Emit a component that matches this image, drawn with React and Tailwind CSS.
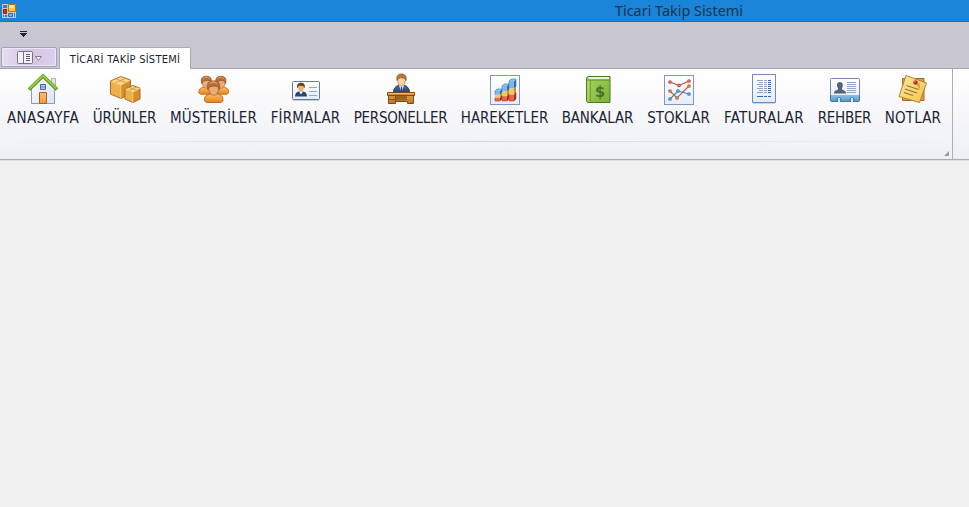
import React from "react";

function Gradient({ id, from, to, diagonal }) {
  return (
    <linearGradient id={id} x1="0" y1="0" x2={diagonal ? "1" : "0"} y2="1">
      <stop stopColor={from} />
      <stop offset="1" stopColor={to} />
    </linearGradient>
  );
}

function IconBox({ children }) {
  return (
    <svg className="block size-8 shrink-0" viewBox="0 0 32 32" fill="none">
      {children}
    </svg>
  );
}

function HomeIcon() {
  return (
    <IconBox>
      <defs>
        <Gradient id="wall" from="#ffffff" to="#d9e3f3" diagonal />
        <Gradient id="door" from="#f8c27c" to="#ef9a3c" />
      </defs>
      <path d="M24.500 5.500h4v9h-4z" fill="#dfe7f5" stroke="#a3b0cf" />
      <path d="M4.500 15 16 4l11.500 11v15.500h-23z" fill="url(#wall)" stroke="#8b9cc4" />
      <path d="M2 16.500 16 3l14 13.500" stroke="#5f961b" strokeWidth="3.600" />
      <path d="M2.500 15.700 16 2.700l13.500 13" stroke="#9bd343" strokeWidth="1.600" />
      <path d="M13.500 11.500h5v5h-5z" fill="#a9c5ec" stroke="#4a66a4" />
      <path d="M14 14h4" stroke="#6f8dc4" />
      <path d="M12.500 19.500h7v11h-7z" fill="url(#door)" stroke="#b5591a" />
    </IconBox>
  );
}

function Cube({ x, y, w, h }) {
  const t = h * 0.2;
  return (
    <g transform={`translate(${x} ${y})`} strokeLinejoin="round">
      <path d={`M0 ${t} ${w * 0.52} 0 ${w} ${t * 0.8} ${w * 0.52} ${t * 2}z`} fill="#f8d684" />
      <path d={`M0 ${t} ${w * 0.52} ${t * 2}V${h}L0 ${h - t}z`} fill="#eeb048" />
      <path d={`M${w * 0.52} ${t * 2} ${w} ${t * 0.8}V${h - t}L${w * 0.52} ${h}z`} fill="#d58e2b" />
      <path
        d={`M0 ${t} ${w * 0.52} 0 ${w} ${t * 0.8}V${h - t}L${w * 0.52} ${h} 0 ${h - t}z`}
        stroke="#a0621d"
        strokeWidth=".9"
      />
      <path d={`M0 ${t} ${w * 0.52} ${t * 2} ${w} ${t * 0.8}M${w * 0.52} ${t * 2}V${h}`} stroke="#f6d27d" strokeWidth=".7" />
      <path d={`M${w * 0.25} ${t * 0.5} ${w * 0.76} ${t * 1.4}M${w * 0.25} ${t * 1.4} ${w * 0.76} ${t * 0.45}`} stroke="#c78c35" strokeWidth=".7" />
    </g>
  );
}

function BoxesIcon() {
  return (
    <IconBox>
      <Cube x={1.5} y={3.500} w={20} h={22} />
      <Cube x={16} y={12.500} w={15} h={17} />
    </IconBox>
  );
}

function Person({ x, y, s }) {
  return (
    <g transform={`translate(${x} ${y}) scale(${s})`}>
      <path d="M1 18.500c0-3.500 2-4.500 6-5.500h6c4 1 6 2 6 5.500v1.500l-2 1.500H3L1 20z" fill="url(#torso)" stroke="#b55f14" strokeWidth=".9" />
      <path d="M7.500 13 10 16l2.500-3" fill="#f9dcb1" />
      <path d="M5 6c0 5.500 2 8.500 5 8.500s5-3 5-8.500L12 4H8z" fill="#e9ac78" stroke="#a55f30" strokeWidth=".8" />
      <path d="M4.300 9C2.700 2.500 5.500.3 9.500.4c5-.4 7.200 2.400 6.100 8.600l-1.500-3.200L10 5.300 6.500 6z" fill="#b86f38" stroke="#8f4a1f" strokeWidth=".7" />
      <path d="M6 3c2-2 5-2 7.500 0" stroke="#e2a56d" />
    </g>
  );
}

function CustomersIcon() {
  return (
    <IconBox>
      <defs>
        <Gradient id="torso" from="#fbbd62" to="#e9861b" />
      </defs>
      <Person x={0} y={3} s={0.85} />
      <Person x={14.500} y={3} s={0.85} />
      <Person x={5.500} y={7.500} s={1.02} />
    </IconBox>
  );
}

function CardIcon() {
  return (
    <IconBox>
      <defs>
        <Gradient id="card" from="#ffffff" to="#e3ecf8" />
      </defs>
      <rect x="2.500" y="8.500" width="27" height="18" rx="1" fill="url(#card)" stroke="#5f79ac" />
      <path d="M3 27.500h26" stroke="#c9ccd6" />
      <path d="M5 23.500c0-3 1.500-4.500 4-5h4c2.500.5 4 2 4 5z" fill="#2b4474" />
      <path d="m9 18.500 2 3 2-3z" fill="#fff" />
      <path d="M8 12.500c0 4 1.300 6.500 3 6.500s3-2.500 3-6.500z" fill="#e8b37c" />
      <path d="M7.500 15.500c-1.200-4 .7-5.700 3.500-5.700s4.700 1.700 3.500 5.700l-1.300-2.500-4.400-.3z" fill="#70421c" />
      <path d="M19 14.500h8M19 18.500h8M19 22.500h8" stroke="#8fa6cf" />
    </IconBox>
  );
}

function StaffIcon() {
  return (
    <IconBox>
      <defs>
        <Gradient id="suit" from="#4d6fab" to="#213e79" />
        <Gradient id="desk" from="#d9a052" to="#b87726" />
      </defs>
      <path d="M8.500 20c0-5 2.500-7 6-8h4c3.500 1 6 3 6 8z" fill="url(#suit)" stroke="#1e3769" />
      <path d="m14 12 2.500 8 2.500-8z" fill="#fff" />
      <path d="m15.900 13.500-.5 5 1.100 1.500 1.100-1.500-.5-5z" fill="#284785" />
      <path d="M12.500 5c0 5 1.500 8 4 8s4-3 4-8z" fill="#f8d0a5" stroke="#b87a46" strokeWidth=".7" />
      <path d="M12 7.500c-1-5 1.500-6.500 4.500-6.500s5.500 1.500 4.500 6.500L19.500 5 15 4z" fill="#b47a43" stroke="#85501f" strokeWidth=".7" />
      <path d="M3.500 20h7v10.500h-7z" fill="url(#desk)" stroke="#804b17" />
      <path d="M11 22h17.500v8.500h-6v-2H11z" fill="url(#desk)" stroke="#804b17" />
      <path d="M11.500 22.500h10.500v5H11.500z" fill="#9c6420" />
      <path d="M2.500 19.500h27v3h-27z" fill="#cf9343" stroke="#804b17" />
      <path d="M3 20.500h26" stroke="#e9b769" />
      <path d="M4 26.500h6" stroke="#925d21" />
    </IconBox>
  );
}

function Frame() {
  return (
    <>
      <Gradient id="frame" from="#ffffff" to="#e5ecf8" />
      <rect x="1.500" y="2.500" width="29" height="29" fill="url(#frame)" stroke="#8296c1" />
    </>
  );
}

function Bar({ x, y, h }) {
  return (
    <g transform={`translate(${x} ${y})`}>
      <rect y="2" width="5" height={h * 0.37} fill="#7cb8e9" />
      <rect y={2 + h * 0.37} width="5" height={h * 0.31} fill="#f6c965" />
      <rect y={2 + h * 0.68} width="5" height={h * 0.32} fill="#e66849" />
      <path d={`M5 2 7 0v${h * 0.37}l-2 2z`} fill="#2d70b5" />
      <path d={`M5 ${2 + h * 0.37} 7 ${h * 0.37}v${h * 0.31}l-2 2z`} fill="#c98a30" />
      <path d={`M5 ${2 + h * 0.68} 7 ${h * 0.68}v${h * 0.32}l-2 2z`} fill="#a22f22" />
      <path d="M0 2 2 0h5L5 2z" fill="#8fc4ee" />
      <path d={`M0 ${2 + h * 0.37}V2L2 0h5v${h * 0.37}`} stroke="#3277ba" strokeWidth=".6" />
      <path d={`M0 ${2 + h * 0.68}V${2 + h}h5L7 ${h}V${h * 0.68}`} stroke="#a5392b" strokeWidth=".6" />
    </g>
  );
}

function BarsIcon() {
  return (
    <IconBox>
      <Frame />
      <Bar x={6} y={16} h={10} />
      <Bar x={13} y={11} h={15} />
      <Bar x={20} y={6} h={20} />
    </IconBox>
  );
}

function BankIcon() {
  return (
    <IconBox>
      <defs>
        <Gradient id="book" from="#aad566" to="#7bb032" diagonal />
      </defs>
      <path d="M4.500 5.500q0-2 2-2h21.500v26h-21.500q-2 0-2-2z" fill="url(#book)" stroke="#4b7b1c" />
      <path d="M6.500 4h20.500v2.500H7z" fill="#e9f0e6" />
      <path d="M5.500 7h22" stroke="#4f871c" />
      <path d="M8.500 7v22" stroke="#6fa337" />
      <path d="M6 8v20" stroke="#b4dd70" />
      <text x="18" y="24" textAnchor="middle" fill="#47702a" fontFamily="DejaVu Sans, sans-serif" fontWeight="700" fontSize="16">$</text>
    </IconBox>
  );
}

function Series({ points, color }) {
  return (
    <g stroke={color}>
      <polyline points={points.map((p) => p.join(",")).join(" ")} strokeWidth="1.100" />
      {points.map(([x, y]) => (
        <circle key={x} cx={x} cy={y} r="1.200" fill="#fff" strokeWidth="1.300" />
      ))}
    </g>
  );
}

function LinesIcon() {
  return (
    <IconBox>
      <Frame />
      <Series color="#c4473d" points={[[7, 9], [16, 12.500], [26, 8]]} />
      <Series color="#b9622f" points={[[7, 18], [14, 25], [26, 13]]} />
      <Series color="#3d80bb" points={[[7, 26], [15, 18], [26, 21]]} />
    </IconBox>
  );
}

function InvoiceIcon() {
  return (
    <IconBox>
      <defs>
        <Gradient id="invoice" from="#ffffff" to="#e1eaf8" />
      </defs>
      <path d="M4.500 1.500h23v28h-23z" fill="url(#invoice)" stroke="#7189b8" />
      <path d="M5 30.500h22" stroke="#d2d5dd" />
      <path d="M9 7.500h6M11 9.500h4M9 11.500h6M11 13.500h4M9 15.500h6M11 17.500h4M9 19.500h6M16 7.500h3M16 9.500h3M16 11.500h3M16 13.500h3M16 15.500h3M16 17.500h3M16 19.500h3" stroke="#8da3ce" />
      <path d="M20 7.500h3M20 9.500h3M20 11.500h3M20 13.500h3M20 15.500h3M20 17.500h3M20 19.500h3M9 23.500h6M16 23.500h3M20 23.500h3" stroke="#2f68b4" />
    </IconBox>
  );
}

function ContactsIcon() {
  return (
    <IconBox>
      <defs>
        <Gradient id="contact" from="#ffffff" to="#e3ebf6" />
        <Gradient id="holder" from="#8cc0e6" to="#5798cd" />
      </defs>
      <rect x="1.500" y="5.500" width="29" height="23" rx="1" fill="url(#contact)" stroke="#7187b1" />
      <path d="M2 22h28v6.500H2z" fill="url(#holder)" />
      <path d="M1.500 22v5.500l1 1h27l1-1V22" stroke="#47759f" />
      <path d="M5 20.500c0-3 2-3 4-4V15c-1.500-2-1.500-6 1.800-6S14.500 13 13 15v1.500c2 1 4 1 4 4z" fill="#54617d" />
      <path d="M18 9.500h9M18 11.500h9M18 13.500h9M18 15.500h9M18 17.500h9M18 19.500h9" stroke="#91a8cf" />
      <path d="M8.200 27.500c-1.200-3.600 4.800-3.600 3.600 0M21.200 27.500c-1.200-3.600 4.800-3.600 3.600 0" stroke="#346593" strokeWidth=".9" />
      <path d="M10 25v4M23 25v4" stroke="#fff" strokeWidth="1.500" />
    </IconBox>
  );
}

function NotesIcon() {
  return (
    <IconBox>
      <defs>
        <Gradient id="note" from="#fdeb9d" to="#f2c34d" diagonal />
      </defs>
      <path d="M5.500 5.500h21.500v22h-21.500z" fill="#d99f43" stroke="#a9692a" />
      <path d="M9 2.500 29.500 10l-7 19.500L2 23.500z" fill="url(#note)" stroke="#b98030" />
      <path d="m9.500 12.500 12 4M8 16l12 4M7 19.500l9 3" stroke="#96713b" strokeWidth="1.100" />
      <path d="m18.500 10.500 5 6.500-1-7z" fill="#a77b36" opacity=".5" />
      <circle cx="18.500" cy="9.500" r="2.200" fill="#c9261d" />
      <circle cx="17.800" cy="8.700" r=".7" fill="#f39a83" />
    </IconBox>
  );
}

const items = [
  { label: "ANASAYFA", icon: HomeIcon, width: "w-[86px]", tracking: "tracking-[0.35px]" },
  { label: "ÜRÜNLER", icon: BoxesIcon, width: "w-[77px]", tracking: "tracking-[-0.15px]" },
  { label: "MÜSTERİLER", icon: CustomersIcon, width: "w-[101px]", tracking: "tracking-[0.15px]" },
  { label: "FİRMALAR", icon: CardIcon, width: "w-[83px]", tracking: "tracking-[0.15px]" },
  { label: "PERSONELLER", icon: StaffIcon, width: "w-[107px]", tracking: "tracking-[-0.3px]" },
  { label: "HAREKETLER", icon: BarsIcon, width: "w-[101px]", tracking: "tracking-[-0.1px]" },
  { label: "BANKALAR", icon: BankIcon, width: "w-[85px]", tracking: "tracking-[-0.15px]" },
  { label: "STOKLAR", icon: LinesIcon, width: "w-[77px]", tracking: "tracking-[0px]" },
  { label: "FATURALAR", icon: InvoiceIcon, width: "w-[94px]", tracking: "tracking-[0.35px]" },
  { label: "REHBER", icon: ContactsIcon, width: "w-[67px]", tracking: "tracking-[-0.3px]" },
  { label: "NOTLAR", icon: NotesIcon, width: "w-[70px]", tracking: "tracking-[0.15px]" },
];

function RibbonButton({ label, icon: Icon, width, tracking }) {
  return (
    <button className={`flex shrink-0 flex-col items-center ${width}`}>
      <Icon />
      <span className={`mt-[3px] text-[15px] leading-5 whitespace-nowrap text-[#201f35] ${tracking}`}>{label}</span>
    </button>
  );
}

function TitleBar() {
  return (
    <header className="flex h-[22px] items-center border-b border-[#1770bb] bg-[#1a84d9]">
      <svg className="ml-0.5 size-[14px] shrink-0" viewBox="0 0 14 14">
        <path d="M0 0h14v14H0z" fill="#c9c8c5" />
        <path d="M1 1h4v3H1zM1 11h1v2H1zM3 11h2v2H3zM12 9h1v4h-1z" fill="#2982d4" />
        <path d="M6.500.500h7v7h-7z" fill="#f7ca43" stroke="#b77812" />
        <path d="M7 1h5v3H7z" fill="#fde58c" />
        <path d="M1.500 5.500h3v4h-3z" fill="#d92f21" stroke="#9c1c14" />
        <path d="M6.500 9.500h4v3h-4z" fill="#7eabe9" stroke="#376bbd" />
      </svg>
      <h1 className="ml-[599px] font-['Noto_Sans','Open_Sans',sans-serif] text-[14.4px] leading-5 whitespace-nowrap text-[#17354f]">
        Ticari Takip Sistemi
      </h1>
    </header>
  );
}

function TabStrip() {
  return (
    <div className="flex h-[47px] flex-col justify-between bg-[#c8c7d1]">
      <svg className="mt-[9px] ml-5 h-[6px] w-[7px]" viewBox="0 0 7 6">
        <path d="M0 0h7v1H0zM0 2h7v1H6v1H5v1H4v1H3V5H2V4H1V3H0z" fill="#222136" />
      </svg>
      <div className="flex items-end shadow-[inset_0_-1px_0_#a5a4b1]">
        <button className="mb-[2px] ml-px flex h-5 w-[56px] items-center justify-center gap-0.5 rounded-[2px] border border-[#a6a0b8] bg-linear-to-r from-[#e3dff2] via-[#d8c3e4] to-[#d9d0ef] shadow-[inset_0_0_0_1px_#ece7f6]">
          <svg className="h-[13px] w-4 shrink-0" viewBox="0 0 16 13" fill="none">
            <rect x=".5" y=".5" width="15" height="12" rx="1" fill="#f3f0f8" stroke="#777482" />
            <path d="M6.500 1v11" stroke="#777482" />
            <path d="M9 3.500h4M9 5.500h4M9 7.500h4M9 9.500h4" stroke="#605d6a" />
          </svg>
          <svg className="mt-0.5 h-[5px] w-[7px] shrink-0" viewBox="0 0 7 5">
            <path d="M.6.500h5.800L3.500 4.300z" fill="#fff" stroke="#777184" strokeWidth=".9" />
          </svg>
        </button>
        <div className="ml-0.5 flex h-[22px] w-[132px] items-center justify-center rounded-t-[2px] border border-b-0 border-[#a9a8b5] bg-white pt-[3px]">
          <span className="text-[11px] leading-4 tracking-[0.25px] whitespace-nowrap text-[#201f35]">TİCARİ TAKİP SİSTEMİ</span>
        </div>
      </div>
    </div>
  );
}

export default function App() {
  return (
    <main className="flex h-screen w-full flex-col overflow-hidden bg-[#f0f0f0] font-['DejaVu_Sans_Condensed','DejaVu_Sans',sans-serif] font-stretch-condensed">
      <TitleBar />
      <TabStrip />
      <section className="flex h-[91px] border-b border-[#a9a8b3] bg-linear-to-b from-white to-[#eeeff4] shadow-[0_1px_0_#dcdce0]">
        <div className="flex w-[953px] flex-col border-r border-[#aeadb8]">
          <div className="flex h-[72px] pt-1">
            {items.map((item) => (
              <RibbonButton key={item.label} {...item} />
            ))}
          </div>
          <div className="h-px bg-linear-to-r from-transparent via-[#d5d6dd] to-transparent" />
          <div className="flex flex-1 items-end justify-end pr-[3px] pb-[3px]">
            <svg className="size-[5px]" viewBox="0 0 5 5">
              <path d="M5 0v5H0z" fill="#9a99a6" />
            </svg>
          </div>
        </div>
      </section>
    </main>
  );
}
